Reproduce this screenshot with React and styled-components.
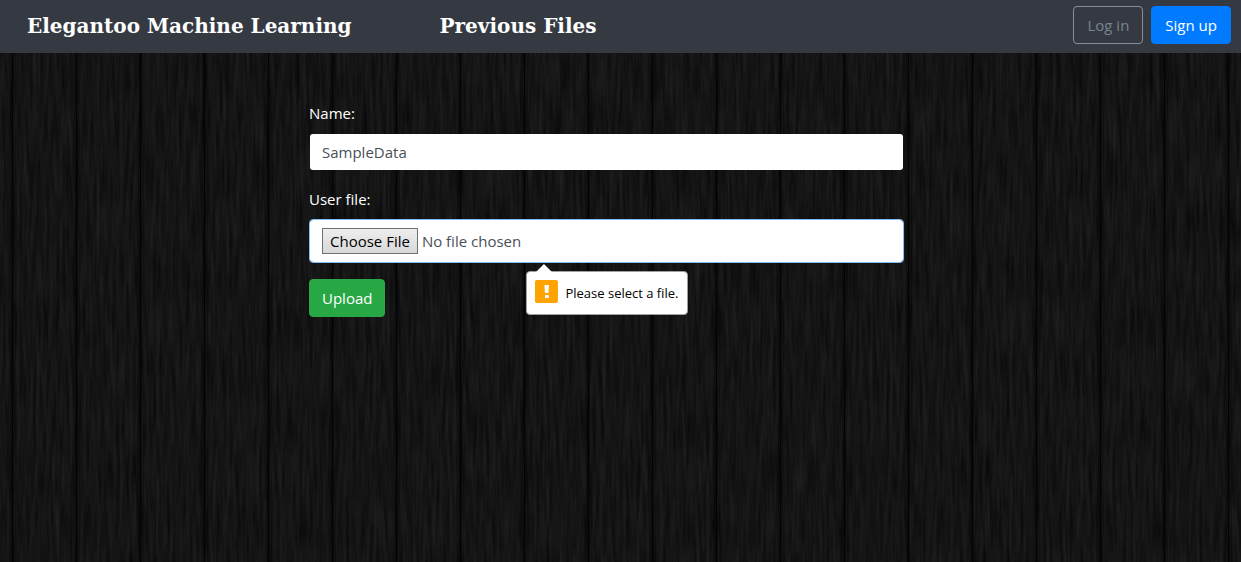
import React from "react";
import styled, { createGlobalStyle, css } from "styled-components";

const GlobalStyle = createGlobalStyle`
  *, *::before, *::after { box-sizing: border-box; }
  body {
    margin: 0;
    background: #131313;
    color: #fff;
    font: 400 15px/24px "Open Sans", "Noto Sans", sans-serif;
  }
`;

const Page = styled.div`
  position: relative;
  isolation: isolate;
  min-height: 100vh;
  overflow: hidden;
`;

const Backdrop = styled.svg`
  position: absolute;
  inset: 0;
  z-index: -1;
  width: 100%;
  height: 100%;
`;

const Navbar = styled.header`
  display: flex;
  align-items: flex-start;
  justify-content: space-between;
  flex-wrap: wrap;
  min-height: 53px;
  padding: 6px 10px 7px 27px;
  background: #353a42;
`;

const NavLinks = styled.nav`
  display: flex;
  flex-wrap: wrap;
  gap: 0 88px;
`;

const NavLink = styled.a`
  color: #fff;
  font: 700 20px/40px "DejaVu Serif", serif;
  text-decoration: none;
`;

const Actions = styled.div`
  display: flex;
  gap: 8px;
`;

const variants = {
  primary: css`
    background: #007bff;
    border-color: #007bff;
    color: #fff;
  `,
  success: css`
    background: #28a745;
    border-color: #28a745;
    color: #fff;
  `,
  outline: css`
    background: transparent;
    border-color: #868e96;
    color: #7a828a;
  `,
};

const Button = styled.button`
  height: 38px;
  padding: 0 12px;
  border: 1px solid;
  border-radius: 4px;
  font: inherit;
  cursor: pointer;
  ${({ $variant }) => variants[$variant]}

  ${Actions} & {
    padding: 0 13px;
  }
`;

const Main = styled.main`
  display: grid;
  grid-template-columns: 309fr 595fr 337fr;
  padding: 48px 0;
`;

const Form = styled.form`
  grid-column: 2;
  display: flex;
  flex-direction: column;
  align-items: flex-start;
  gap: 16px;
`;

const Field = styled.div`
  position: relative;
  display: flex;
  flex-direction: column;
  gap: 8px;
  width: 100%;
`;

const control = css`
  width: 100%;
  border: 1px solid transparent;
  border-radius: 4px;
  background: #fff;
  background-clip: padding-box;
  color: #495057;
  font: inherit;
  outline: 0;
`;

const TextInput = styled.input`
  ${control}
  height: 38px;
  padding: 0 12px;
`;

const FileInput = styled.input`
  ${control}
  height: 44px;
  padding: 8px 12px;
  border-color: #80bdff;

  &::file-selector-button {
    height: 26px;
    margin: 0 4px 0 0;
    padding: 0 7px;
    border: 1px solid #707070;
    border-radius: 0;
    background: linear-gradient(#eee, #d8d8d8);
    color: #000;
    font: inherit;
  }
`;

const Popup = styled.div`
  position: absolute;
  top: calc(100% + 8px);
  left: 50%;
  transform: translateX(-50%);
  display: flex;
  gap: 8px;
  height: 44px;
  padding: 8px;
  border: 1px solid #a0a0a0;
  border-radius: 4px;
  background: #fff;
  color: #000;
  font-size: 13px;
  line-height: 26px;
  white-space: nowrap;
`;

const PopupArrow = styled.svg`
  position: absolute;
  top: -8px;
  left: 8px;
`;

export default function App() {
  return (
    <Page>
      <GlobalStyle />
      <Backdrop aria-hidden="true">
        <defs>
          <filter id="grain" x="0" y="0" width="100%" height="100%" colorInterpolationFilters="sRGB">
            <feTurbulence type="fractalNoise" baseFrequency="0.3 0.02" numOctaves="4" seed="7" result="fibres" />
            <feColorMatrix
              in="fibres"
              type="matrix"
              values="0.1 0.04 0 0 0.01  0.1 0.04 0 0 0.01  0.1 0.04 0 0 0.01  0 0 0 0 1"
            />
          </filter>
          <linearGradient id="seam">
            <stop offset="0" stopColor="#000" stopOpacity="0" />
            <stop offset="0.4" stopColor="#000" stopOpacity="0.4" />
            <stop offset="0.5" stopColor="#000" stopOpacity="0.9" />
            <stop offset="0.6" stopColor="#000" stopOpacity="0.3" />
            <stop offset="1" stopColor="#000" stopOpacity="0" />
          </linearGradient>
          <pattern id="planks" width="64" height="64" patternUnits="userSpaceOnUse">
            <rect x="8" width="9" height="64" fill="url(#seam)" />
          </pattern>
        </defs>
        <rect width="100%" height="100%" filter="url(#grain)" />
        <rect width="100%" height="100%" fill="url(#planks)" />
      </Backdrop>

      <Navbar>
        <NavLinks>
          <NavLink href="#home">Elegantoo Machine Learning</NavLink>
          <NavLink href="#files">Previous Files</NavLink>
        </NavLinks>
        <Actions>
          <Button type="button" $variant="outline">Log in</Button>
          <Button type="button" $variant="primary">Sign up</Button>
        </Actions>
      </Navbar>

      <Main>
        <Form noValidate onSubmit={(e) => e.preventDefault()}>
          <Field>
            <label htmlFor="name">Name:</label>
            <TextInput id="name" type="text" defaultValue="SampleData" />
          </Field>
          <Field>
            <label htmlFor="file">User file:</label>
            <FileInput id="file" type="file" aria-describedby="file-error" />
            <Popup id="file-error" role="alert">
              <PopupArrow width="18" height="9" aria-hidden="true">
                <path d="M0 9 L9 0 L18 9Z" fill="#fff" />
              </PopupArrow>
              <svg width="23" height="23" aria-hidden="true">
                <rect width="23" height="23" rx="2" fill="#ffa300" />
                <path d="M9.5 5H14L13.5 13H10Z" fill="#fff" />
                <rect x="10" y="15" width="4" height="3" rx="1" fill="#fff" />
              </svg>
              Please select a file.
            </Popup>
          </Field>
          <Button type="submit" $variant="success">Upload</Button>
        </Form>
      </Main>
    </Page>
  );
}
